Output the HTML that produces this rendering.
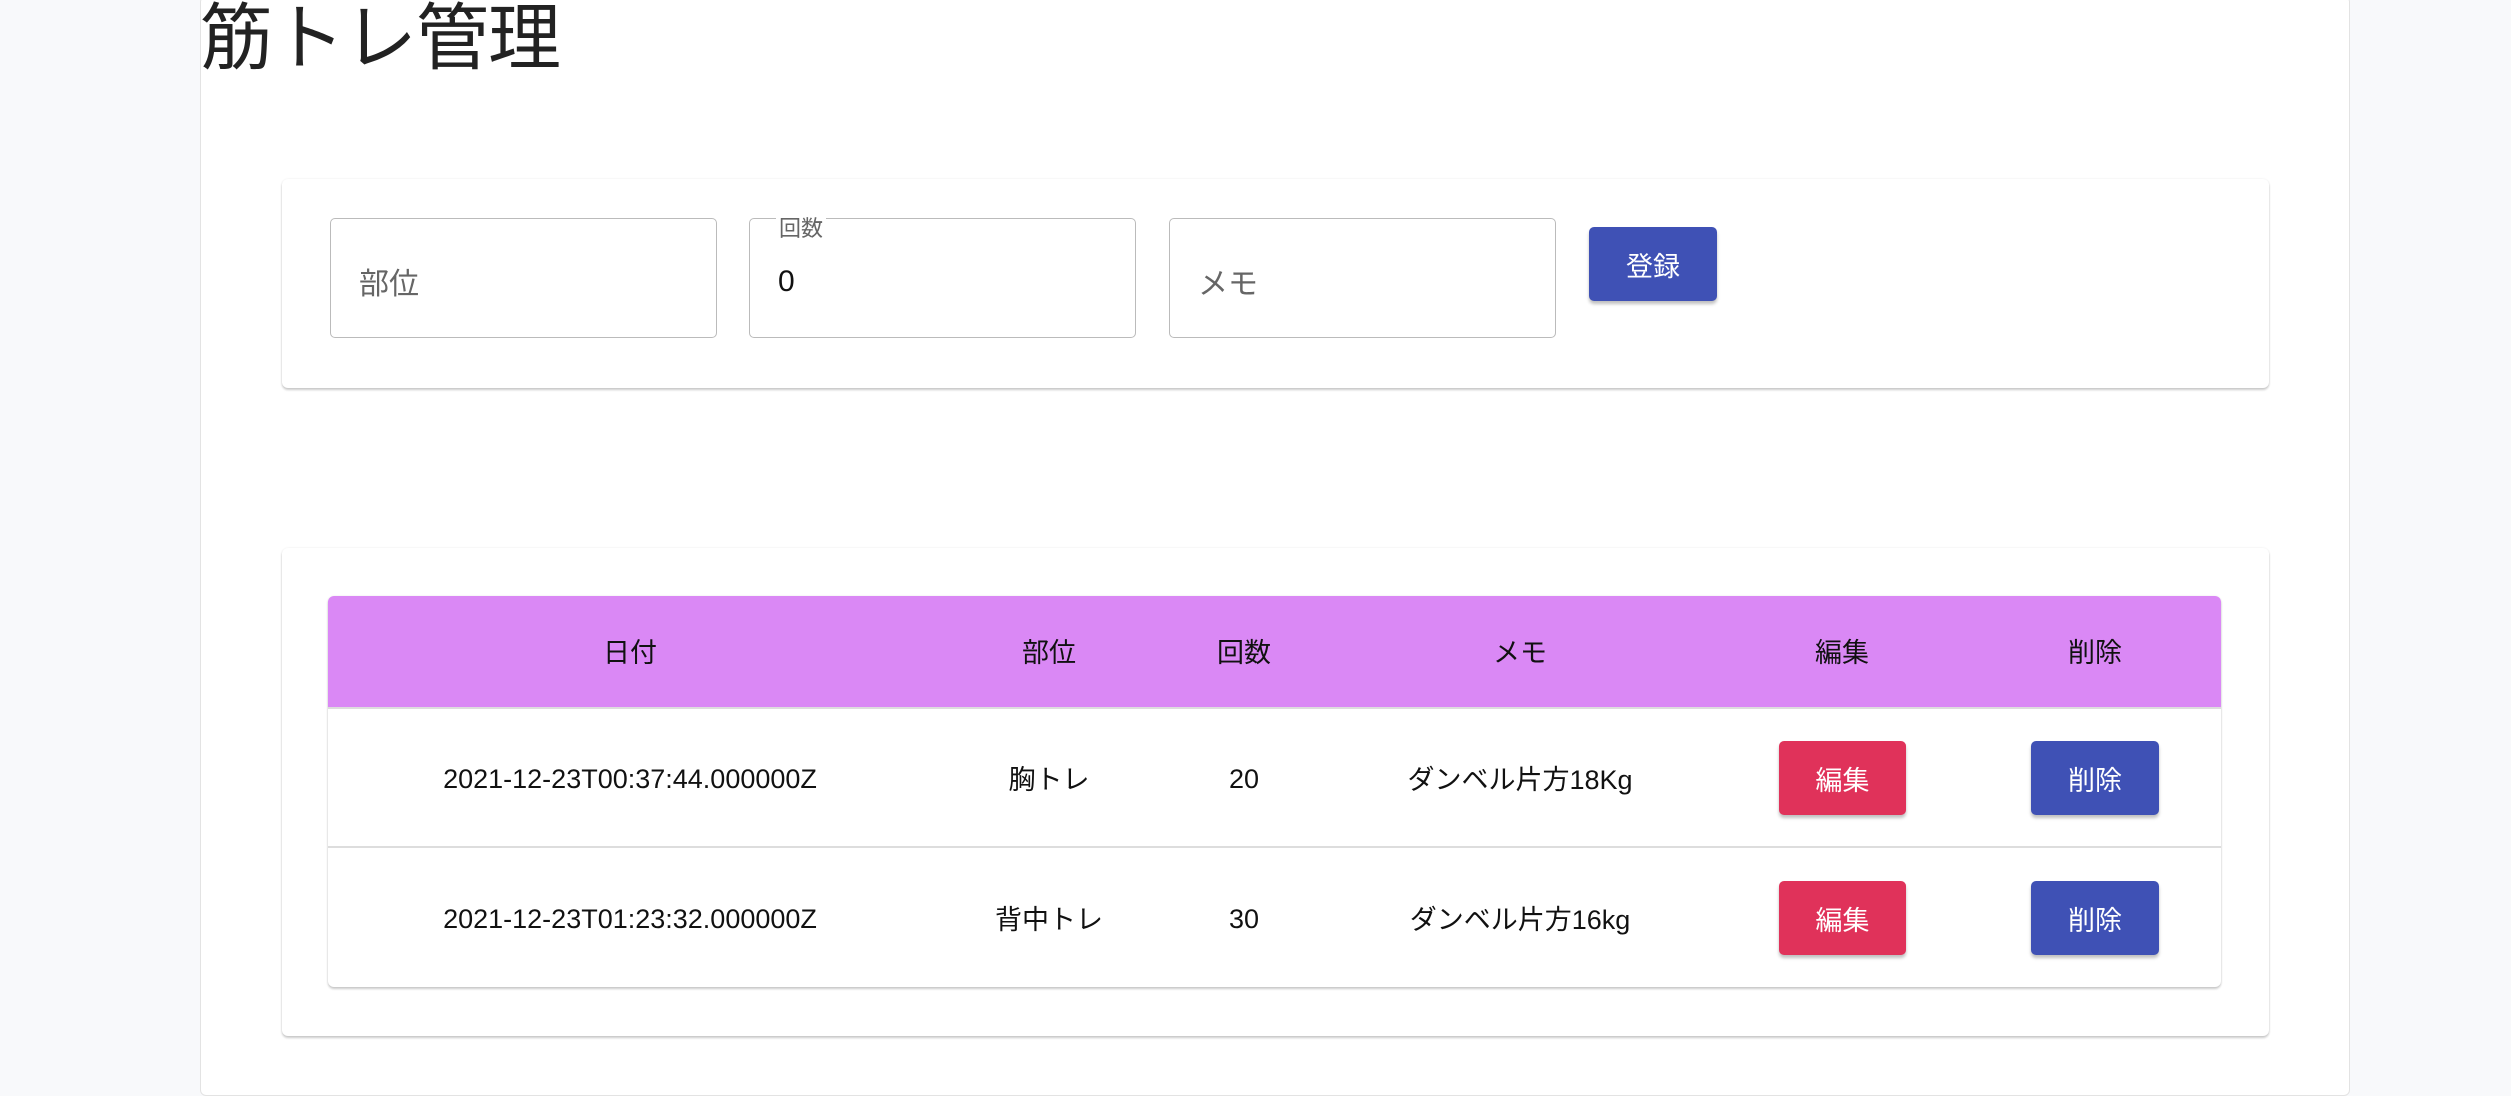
<!DOCTYPE html>
<html style="height:1096px;overflow:hidden"><head><meta charset="utf-8"><style>
*{box-sizing:border-box;margin:0;padding:0}
body{width:2511px;height:1096px;background:#f8f9fb;font-family:"Liberation Sans","Noto Sans CJK JP",sans-serif;position:relative;overflow:hidden;color:#222}
.abs{position:absolute}
.cont{left:200px;top:-4px;width:2150px;height:1100px;background:#fff;border:1px solid #e3e3e3;border-radius:6px}
h1{position:absolute;left:200px;top:-1px;font-size:73px;font-weight:400;color:#222;line-height:80px;letter-spacing:-1px}
.card{background:#fff;border-radius:6px;box-shadow:0 2px 2px rgba(0,0,0,.2),0 0 2px rgba(0,0,0,.08)}
.inp{border:1.5px solid #bbb;border-radius:5px;height:120px;top:218px;width:387px;background:#fff}
.ph{position:absolute;left:28px;top:40px;font-size:30px;color:#666}
.btn{color:#fff;font-size:27px;display:flex;align-items:center;justify-content:center;border-radius:5px;box-shadow:0 3px 3px rgba(0,0,0,.25)}
.blue{background:#3f51b5}.red{background:#e0325a}
.c{position:absolute;width:500px;text-align:center;font-size:27px;color:#111;line-height:40px}
</style></head><body>
<div class="abs cont"></div>
<h1>筋トレ管理</h1>
<div class="abs card" style="left:282px;top:179px;width:1987px;height:209px"></div>
<div class="abs inp" style="left:330px"><span class="ph">部位</span></div>
<div class="abs inp" style="left:749px"><span class="abs" style="left:26px;top:-8px;font-size:22px;color:#666;background:#fff;padding:0 3px">回数</span><span class="ph" style="color:#111;top:46px">0</span></div>
<div class="abs inp" style="left:1169px"><span class="ph">メモ</span></div>
<div class="abs btn blue" style="left:1589px;top:227px;width:128px;height:74px">登録</div>

<div class="abs card" style="left:282px;top:548px;width:1987px;height:488px"></div>
<div class="abs card" style="left:328px;top:596px;width:1893px;height:391px;overflow:hidden">
 <div class="abs" style="left:0;top:0;width:100%;height:112px;background:#da88f5"></div>
 <div class="abs" style="left:0;top:111px;width:100%;height:2px;background:#ddd"></div>
 <div class="abs" style="left:0;top:250px;width:100%;height:2px;background:#ddd"></div>
</div>
<div class="c" style="left:380px;top:633px">日付</div>
<div class="c" style="left:799px;top:633px">部位</div>
<div class="c" style="left:994px;top:633px">回数</div>
<div class="c" style="left:1270px;top:633px">メモ</div>
<div class="c" style="left:1592px;top:633px">編集</div>
<div class="c" style="left:1845px;top:633px">削除</div>

<div class="c" style="left:380px;top:759px">2021-12-23T00:37:44.000000Z</div>
<div class="c" style="left:799px;top:760px">胸トレ</div>
<div class="c" style="left:994px;top:759px">20</div>
<div class="c" style="left:1270px;top:760px">ダンベル片方18Kg</div>
<div class="abs btn red" style="left:1779px;top:741px;width:127px;height:74px">編集</div>
<div class="abs btn blue" style="left:2031px;top:741px;width:128px;height:74px">削除</div>

<div class="c" style="left:380px;top:899px">2021-12-23T01:23:32.000000Z</div>
<div class="c" style="left:799px;top:900px">背中トレ</div>
<div class="c" style="left:994px;top:899px">30</div>
<div class="c" style="left:1270px;top:900px">ダンベル片方16kg</div>
<div class="abs btn red" style="left:1779px;top:881px;width:127px;height:74px">編集</div>
<div class="abs btn blue" style="left:2031px;top:881px;width:128px;height:74px">削除</div>
</body></html>
